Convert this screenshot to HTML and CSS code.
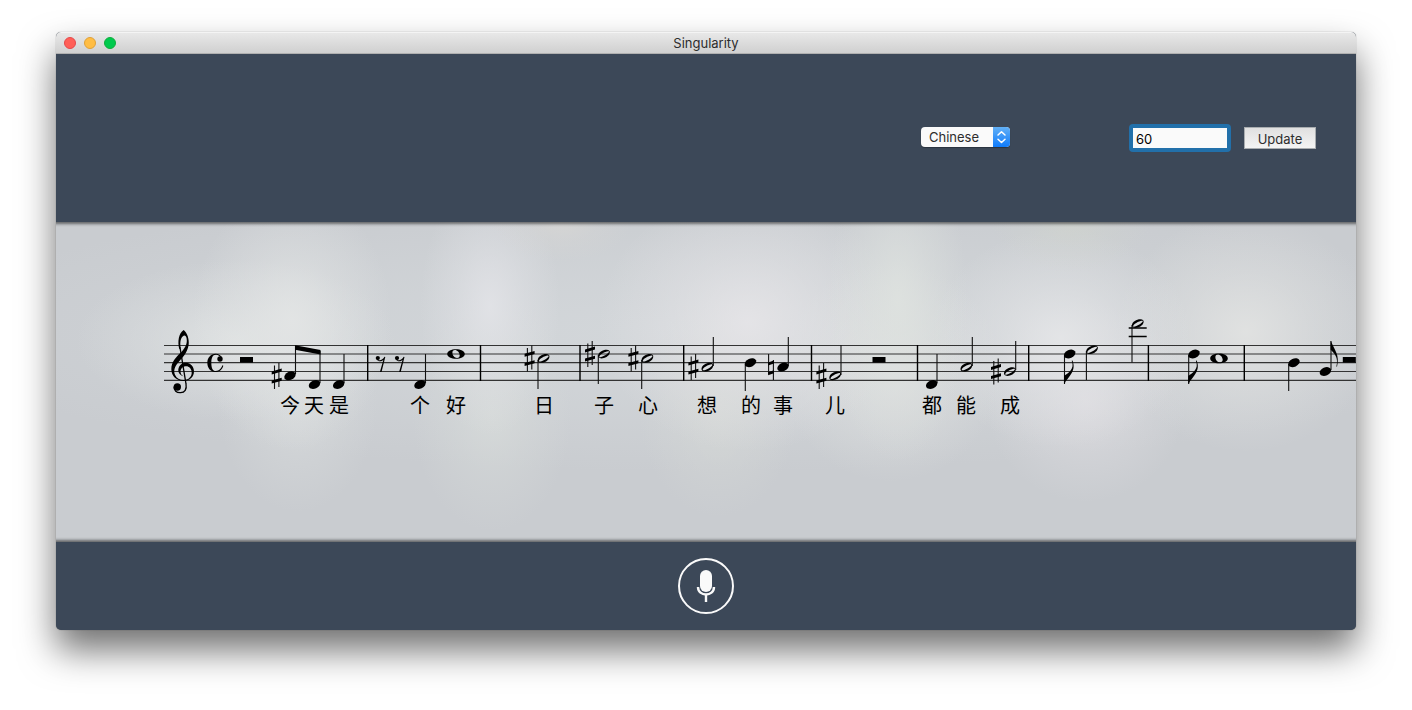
FILE: index.html
```html
<!DOCTYPE html>
<html lang="en">
<head>
  <meta charset="UTF-8">
  <meta name="viewport" content="width=device-width, initial-scale=1.0">
  <title>Singularity</title>
  <link rel="stylesheet" href="styles.css">
</head>
<body>
  <div class="window">
    <header class="titlebar">
      <div class="lights">
        <button class="light close" aria-label="Close"></button>
        <button class="light minimize" aria-label="Minimize"></button>
        <button class="light zoom" aria-label="Zoom"></button>
      </div>
      <h1>Singularity</h1>
    </header>

    <form class="toolbar">
      <div class="select-wrap">
        <select id="language" aria-label="Language">
          <option>Chinese</option>
          <option>English</option>
        </select>
        <svg class="arrows" width="17" height="20" viewBox="0 0 17 20" aria-hidden="true">
          <path d="M5 8 8.5 4.7 12 8M5 12.2l3.5 3.3 3.5-3.3"/>
        </svg>
      </div>
      <input type="text" id="tempo" value="60" aria-label="Tempo">
      <button type="button" class="update-btn">Update</button>
    </form>

    <main class="score">
      <svg class="sheet" width="1300" height="120" viewBox="0 0 1300 120">
        <defs>
          <ellipse id="quarter" rx="6" ry="4.1" transform="rotate(-24)"/>
          <path id="half" fill-rule="evenodd" d="M-5.9 1.6C-5.6-1.8-1-4.4 2.6-4.3 5.2-4.3 6.2-3 5.8-1.2 5 2.4.8 4.4-2.6 4.4-5 4.4-6.1 3.2-5.9 1.6ZM-4.6 3C-3.2 4.2 5.4-.6 5-2.4 4.2-4.4-5.4.6-4.6 3Z"/>
          <path id="whole" fill-rule="evenodd" d="M-8.8 0C-8.8-3-4.6-4.8 0-4.8S8.8-3 8.8 0 4.6 4.8 0 4.8-8.8 3-8.8 0ZM-3.6-1.4C-3.8 1.4-1.4 4 1 4 3 4 3.8 2.8 3.7 1.2 3.5-1.6 1.2-4-1.2-4-2.8-4-3.6-2.9-3.6-1.4Z"/>
          <g id="sharp">
            <path class="thin" d="M-2.2-10.5V13M2.2-13V11"/>
            <path d="M-5-4.6 5-7.4V-4.4L-5-1.6ZM-5 4.6 5 1.8V4.8L-5 7.6Z"/>
          </g>
          <g id="natural">
            <path class="thin" d="M-2.4-13V7M2.4-7V13"/>
            <path d="M-2.9-4.6 2.9-6.6V-3.6L-2.9-1.6ZM-2.9 5.2 2.9 3.2V6.2L-2.9 8.2Z"/>
          </g>
          <rect id="half-rest" width="13" height="5.6"/>
          <g id="eighth-rest">
            <circle cx="-2.7" cy="-5.4" r="2.1"/>
            <path d="M-4-4.6C-1-1.8 2-3.6 4-6.8L4.8-6.4 1 8.4H-.6L2.8-3.6C.8-1.8-2.4-1.6-4-4.6Z"/>
          </g>
          <path id="flag" d="M-.5 0V-8C4-11 10.5-15 7.2-23.2L8-23.4C12-13 4.5-8 .4-1Z"/>
        </defs>

        <!-- staff -->
        <path class="staff" d="M0 35.5H1300M0 44H1300M0 52.7H1300M0 61.5H1300M0 70.3H1300"/>
        <path class="bars" d="M203.7 35V71M316.5 35V71M416 35V71M519.7 35V71M647.5 35V71M753.5 35V71M864.7 35V71M984.4 35V71M1080.3 35V71"/>

        <!-- treble clef and common time -->
        <g transform="translate(-4 0) scale(.3333)">
          <path d="M58 118C52 95 56 70 71 60 82 68 88 88 86 104 82 130 66 143 54 158 44 170 40 182 45 194 50 206 62 211 72 210 88 209 96 198 95 186 94 174 85 167 76 169 66 171 60 179 62 188 63 194 67 197 71 199 60 197 54 188 55 178 57 164 68 157 78 158 93 159 102 170 102 184 102 202 88 213 71 213 50 213 34 199 34 178 34 156 48 142 60 130 72 118 83 104 80 86 79 78 74 75 71 77 62 81 59 97 62 114Z"/>
          <path class="clef-stem" d="M60 112 78 222C81 238 74 248 62 248 50 249 41 242 42 230"/>
          <circle cx="52" cy="231" r="11"/>
          <path d="M188 146C184 136 176 131 167 131 152 131 142 143 142 158 142 174 152 186 167 186 179 186 187 178 190 167L187 166C184 176 177 183 168 183 157 183 154 172 154 158 154 144 158 134 167 134 171 134 175 135 178 138Z"/>
          <circle cx="180" cy="147" r="8"/>
        </g>

        <path class="thin" d="M131.5 64V36M156 73V41M180 73V44M261.5 73V44M374 50V79M434.3 45V74M477.7 50V79M549.3 56V27M581.3 54V81M624.3 56V27M677 65V35M773 73V44M808.3 56V27M851.7 60V31M900.5 45V74M922.4 41V70M968 15V52.5M1024.7 45V74M1124.7 54V81M1167 60V31"/>
        <path d="M131 35.3 156.5 40V44.4L131 39.7Z"/>
        <path class="ledger" d="M964.7 18H982.7M964.7 26.5H982.7"/>

        <use href="#half-rest" x="76" y="47"/>
        <use href="#sharp" x="112.7" y="66"/>
        <use href="#quarter" x="126" y="65.8"/>
        <use href="#quarter" x="150.5" y="74.5"/>
        <use href="#quarter" x="174.7" y="74.5"/>

        <use href="#eighth-rest" x="216.5" y="53.5"/>
        <use href="#eighth-rest" x="235.7" y="53.5"/>
        <use href="#quarter" x="256" y="74.5"/>
        <use href="#whole" x="292" y="44"/>

        <use href="#sharp" x="365.6" y="48.4"/>
        <use href="#half" x="379.6" y="48.4"/>

        <use href="#sharp" x="426" y="44"/>
        <use href="#half" x="440" y="44"/>
        <use href="#sharp" x="469.4" y="48.4"/>
        <use href="#half" x="483.4" y="48.4"/>

        <use href="#sharp" x="529.4" y="57"/>
        <use href="#half" x="543.4" y="57.1"/>
        <use href="#quarter" x="586.5" y="52.7"/>
        <use href="#natural" x="607" y="57"/>
        <use href="#quarter" x="619" y="57.1"/>

        <use href="#sharp" x="657.4" y="66"/>
        <use href="#half" x="671.2" y="65.8"/>
        <use href="#half-rest" x="708.5" y="47"/>

        <use href="#quarter" x="767.7" y="74.5"/>
        <use href="#half" x="802.4" y="57.1"/>
        <use href="#sharp" x="832" y="61.5"/>
        <use href="#half" x="845.9" y="61.5"/>

        <use href="#quarter" x="905.7" y="44"/>
        <use href="#flag" x="900.5" y="74"/>
        <use href="#half" x="928" y="39.7"/>
        <use href="#half" x="973.8" y="13.5"/>

        <use href="#quarter" x="1030" y="44"/>
        <use href="#flag" x="1024.7" y="74"/>
        <use href="#whole" x="1055" y="48.4"/>

        <use href="#quarter" x="1130" y="52.7"/>
        <use href="#quarter" x="1161.4" y="61.5"/>
        <use href="#flag" transform="translate(1167 31) scale(.75 -1.1)"/>
        <use href="#half-rest" x="1178.8" y="47"/>

        <g class="lyrics" lang="zh">
          <text x="126" y="103">今</text>
          <text x="150" y="103">天</text>
          <text x="175" y="103">是</text>
          <text x="256" y="103">个</text>
          <text x="292" y="103">好</text>
          <text x="380" y="103">日</text>
          <text x="440" y="103">子</text>
          <text x="484" y="103">心</text>
          <text x="543" y="103">想</text>
          <text x="587" y="103">的</text>
          <text x="619" y="103">事</text>
          <text x="671" y="103">儿</text>
          <text x="768" y="103">都</text>
          <text x="802" y="103">能</text>
          <text x="846" y="103">成</text>
        </g>
      </svg>
    </main>

    <footer class="controls">
      <button class="record-btn" aria-label="Record">
        <svg width="20" height="34" viewBox="0 0 20 34" aria-hidden="true">
          <rect x="4" y="1" width="12" height="22" rx="6" fill="#fafafa"/>
          <path d="M2 18C2 28 18 28 18 18M10 25.5V33" fill="none" stroke="#fafafa" stroke-width="2.4"/>
        </svg>
      </button>
    </footer>
  </div>
</body>
</html>
```
FILE: styles.css
```css
:root {
  --slate: #3c4858;
  --paper: #c9ccd0;
}
* {
  box-sizing: border-box;
}
body {
  margin: 0;
  padding: 32px 56px 80px;
  background: #fff;
  font-family: Inter, "Noto Sans CJK SC", sans-serif;
  font-size: 13px;
  color: #2d2d2d;
}
.window {
  border-radius: 5px;
  overflow: hidden;
  background: var(--slate);
  box-shadow: 0 0 1px rgba(0,0,0,0.5), 0 20px 36px rgba(0,0,0,0.56);
}

/* title bar */
.titlebar {
  display: grid;
  grid-template-columns: 1fr auto 1fr;
  align-items: center;
  height: 22px;
  padding: 0 8px;
  background: linear-gradient(#e8e8e8, #d0d0d0);
  border-top: 1px solid #f4f4f4;
  border-bottom: 1px solid #b0b0b0;
}
.titlebar h1 {
  margin: 0;
  font-size: 13px;
  line-height: 20px;
  font-weight: 400;
}
.lights {
  display: flex;
  gap: 8px;
}
.light {
  width: 12px;
  height: 12px;
  padding: 0;
  border: 1px solid;
  border-radius: 50%;
}
.close {
  background: #ff5f57;
  border-color: #e5484a;
}
.minimize {
  background: #ffbd44;
  border-color: #dfa038;
}
.zoom {
  background: #00ca4e;
  border-color: #10ad3c;
}

/* toolbar */
.toolbar {
  display: flex;
  justify-content: flex-end;
  align-items: center;
  height: 168px;
  padding-right: 40px;
}
.select-wrap {
  display: grid;
  align-items: center;
  justify-items: end;
  margin-right: 119px;
  padding-bottom: 2px;
}
.select-wrap > * {
  grid-area: 1 / 1;
}
select {
  appearance: none;
  width: 89px;
  height: 20px;
  padding: 0 8px;
  border: none;
  border-radius: 4px;
  background: #fafafa;
  box-shadow: 0 1px 1px rgba(0,0,0,0.3);
  font: inherit;
  color: inherit;
}
.arrows {
  border-radius: 0 4px 4px 0;
  background: linear-gradient(#62b0f6, #0f7bfb);
  fill: none;
  stroke: #fff;
  stroke-width: 1.5;
  stroke-linecap: round;
  stroke-linejoin: round;
  pointer-events: none;
}
#tempo {
  width: 102px;
  height: 28px;
  margin-right: 13px;
  padding: 2px 3px 0;
  border: 4px solid #2270aa;
  border-radius: 4px;
  outline: none;
  background: #fafafa;
  font: inherit;
  color: #000;
}
.update-btn {
  width: 72px;
  height: 22px;
  padding: 2px 0 0;
  border: 1px solid #a9adb0;
  background: linear-gradient(#e0e0e0, #f4f4f4);
  font: inherit;
  color: inherit;
}

/* sheet music */
.score {
  height: 320px;
  padding: 88px 0 0 108px;
  overflow: hidden;
  box-shadow: inset 0 6px 3px -4px rgba(0,0,0,0.5), inset 0 -6px 3px -4px rgba(0,0,0,0.5);
  /* soft out-of-focus lights */
  background:
    radial-gradient(70px 40px at 505px 0, rgba(216,215,213,0.8), rgba(216,215,213,0.3) 50%, rgba(216,215,213,0)),
    radial-gradient(80px 50px at 1015px 0, rgba(208,212,206,0.8), rgba(208,212,206,0.3) 50%, rgba(208,212,206,0)),
    radial-gradient(70px 130px at 434px 84px, rgba(226,227,231,0.9), rgba(226,227,231,0.4) 50%, rgba(226,227,231,0)),
    radial-gradient(70px 160px at 842px 80px, rgba(222,226,223,0.9), rgba(222,226,223,0.4) 50%, rgba(222,226,223,0)),
    radial-gradient(150px 130px at 692px 100px, rgba(230,229,232,0.9), rgba(230,229,232,0.4) 50%, rgba(230,229,232,0)),
    radial-gradient(100px 130px at 236px 98px, rgba(227,229,229,0.9), rgba(227,229,229,0.4) 50%, rgba(227,229,229,0)),
    radial-gradient(160px 80px at 180px 118px, rgba(224,227,227,0.9), rgba(224,227,227,0.4) 50%, rgba(224,227,227,0)),
    radial-gradient(130px 110px at 1005px 116px, rgba(229,230,232,0.9), rgba(229,230,232,0.4) 50%, rgba(229,230,232,0)),
    radial-gradient(130px 120px at 1190px 110px, rgba(226,227,226,0.9), rgba(226,227,226,0.4) 50%, rgba(226,227,226,0)),
    radial-gradient(110px 110px at 835px 150px, rgba(223,225,224,0.8), rgba(223,225,224,0.4) 50%, rgba(223,225,224,0)),
    radial-gradient(80px 110px at 242px 180px, rgba(216,219,220,0.9), rgba(216,219,220,0.4) 50%, rgba(216,219,220,0)),
    radial-gradient(80px 120px at 436px 190px, rgba(214,218,217,0.9), rgba(214,218,217,0.4) 50%, rgba(214,218,217,0)),
    radial-gradient(80px 110px at 662px 185px, rgba(213,216,214,0.9), rgba(213,216,214,0.4) 50%, rgba(213,216,214,0)),
    radial-gradient(100px 100px at 1030px 180px, rgba(221,220,224,0.9), rgba(221,220,224,0.4) 50%, rgba(221,220,224,0)),
    radial-gradient(800px 140px at 650px 110px, rgba(212,216,219,0.9), rgba(212,216,219,0.5) 50%, rgba(212,216,219,0)),
    var(--paper);
}
.sheet {
  display: block;
}
.staff {
  stroke: #333;
  stroke-width: 1.2;
}
.bars {
  stroke: #000;
  stroke-width: 1.4;
}
.thin {
  fill: none;
  stroke: #111;
  stroke-width: 1.1;
}
.ledger {
  stroke: #000;
  stroke-width: 1.6;
}
.clef-stem {
  fill: none;
  stroke: #000;
  stroke-width: 4;
}
.lyrics {
  font-family: "Noto Sans CJK SC", sans-serif;
  font-size: 20px;
  text-anchor: middle;
}

/* footer */
.controls {
  display: flex;
  justify-content: center;
  align-items: center;
  height: 88px;
}
.record-btn {
  display: flex;
  justify-content: center;
  align-items: center;
  width: 56px;
  height: 56px;
  padding: 0;
  border: 2px solid #fafafa;
  border-radius: 50%;
  background: none;
}
```
